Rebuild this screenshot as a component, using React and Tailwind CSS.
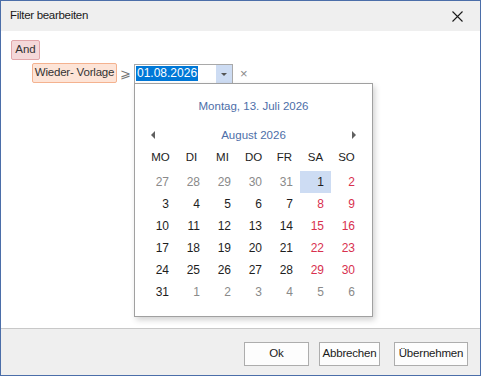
import React from 'react'

const weeks = [
  [[27, 'o'], [28, 'o'], [29, 'o'], [30, 'o'], [31, 'o'], [1, 'sel'], [2, 'we']],
  [[3], [4], [5], [6], [7], [8, 'we'], [9, 'we']],
  [[10], [11], [12], [13], [14], [15, 'we'], [16, 'we']],
  [[17], [18], [19], [20], [21], [22, 'we'], [23, 'we']],
  [[24], [25], [26], [27], [28], [29, 'we'], [30, 'we']],
  [[31], [1, 'o'], [2, 'o'], [3, 'o'], [4, 'o'], [5, 'o'], [6, 'o']],
]

const dayNames = ['MO', 'DI', 'MI', 'DO', 'FR', 'SA', 'SO']

function Calendar() {
  return (
    <div className="absolute left-0 top-[19px] w-[239px] h-[234px] bg-white border border-[#a0a0a0] shadow-[2px_3px_6px_rgba(0,0,0,0.18)] z-10">
      <div className="pt-[14px] h-[30px] text-center leading-[16px] text-[#4d6ea8]">Montag, 13. Juli 2026</div>
      <div className="mt-[13px] h-[16px] flex items-center justify-between px-[16px] text-[#4d6ea8] leading-[16px]">
        <svg width="5" height="8" viewBox="0 0 5 8"><path d="M4 0 L0 4 L4 8 Z" fill="#606060" /></svg>
        <span>August 2026</span>
        <svg width="5" height="8" viewBox="0 0 5 8"><path d="M1 0 L5 4 L1 8 Z" fill="#606060" /></svg>
      </div>
      <div className="mt-[6px] ml-[10px] grid grid-cols-7 w-[217px] h-[16px] leading-[16px] text-[#222]">
        {dayNames.map(d => (
          <div key={d} className="text-center">{d}</div>
        ))}
      </div>
      <div className="mt-[6px] ml-[10px] w-[217px] grid grid-cols-7 text-[12px]">
        {weeks.flat().map(([n, kind], i) => {
          let color = 'text-[#1e1e1e]'
          if (kind === 'o') color = 'text-[#8a8a8a]'
          if (kind === 'we') color = 'text-[#d8314f]'
          return (
            <div
              key={i}
              className={`h-[22px] leading-[22px] text-right pr-[7px] ${color} ${kind === 'sel' ? 'bg-[#cddcf3]' : ''}`}
            >
              {n}
            </div>
          )
        })}
      </div>
    </div>
  )
}

export default function App() {
  return (
    <div className="w-[481px] h-[376px] border border-[#4b6ea9] flex flex-col bg-white text-[11.5px] text-[#1e1e1e] font-['Liberation_Sans',Arial,sans-serif] overflow-hidden whitespace-nowrap">
      <div className="h-[30px] shrink-0 bg-[#efefef] flex items-center justify-between pl-[9px] pr-[17px]">
        <span className="text-[#1a1a1a] tracking-[-0.3px]">Filter bearbeiten</span>
        <svg width="11" height="11" viewBox="0 0 11 11">
          <path d="M0.5 0.5 L10.5 10.5 M10.5 0.5 L0.5 10.5" stroke="#1a1a1a" strokeWidth="1.1" />
        </svg>
      </div>

      <div className="flex-1 relative">
        <div className="mt-[9px] ml-[10px] w-[29px] h-[20px] flex items-center justify-center rounded-[2px] bg-[#f5d8d9] border border-[#e2a6aa] text-[#333]">
          And
        </div>
        <div className="mt-[3px] ml-[31px] flex items-center">
          <div className="w-[85px] h-[20px] flex items-center justify-center rounded-[2px] bg-[#fde4d7] border border-[#f4b28f] text-[#333] tracking-[-0.2px]">
            Wieder- Vorlage
          </div>
          <span className="ml-[3px] w-[14px] text-[#777] text-[13px] leading-none">⩾</span>
          <div className="relative">
            <div className="w-[99px] h-[19px] border border-[#a9a9a9] border-b-0 flex items-stretch bg-white">
              <div className="flex-1 flex items-center pl-[1px]">
                <span className="bg-[#0078d7] text-white px-[1px] leading-[15px] text-[12px]">01.08.2026</span>
              </div>
              <div className="w-[16px] bg-[#cddcf3] flex items-center justify-center h-[19px]">
                <svg width="6" height="3" viewBox="0 0 6 3"><path d="M0 0 L6 0 L3 3 Z" fill="#555" /></svg>
              </div>
            </div>
            <Calendar />
          </div>
          <span className="ml-[7px] text-[#8a8a8a] text-[13px] leading-none">×</span>
        </div>
      </div>

      <div className="h-[47px] shrink-0 bg-[#efefef] border-t border-[#c8c8c8] flex justify-end items-start pt-[13px] pr-[12px]">
        <button className="w-[65px] h-[24px] bg-[#fdfdfd] border border-[#adadad] text-[#1a1a1a]">Ok</button>
        <button className="ml-[10px] w-[61px] h-[24px] bg-[#fdfdfd] border border-[#adadad] text-[#1a1a1a] tracking-[-0.2px]">Abbrechen</button>
        <button className="ml-[14px] w-[74px] h-[24px] bg-[#fdfdfd] border border-[#adadad] text-[#1a1a1a] tracking-[-0.2px]">Übernehmen</button>
      </div>
    </div>
  )
}
